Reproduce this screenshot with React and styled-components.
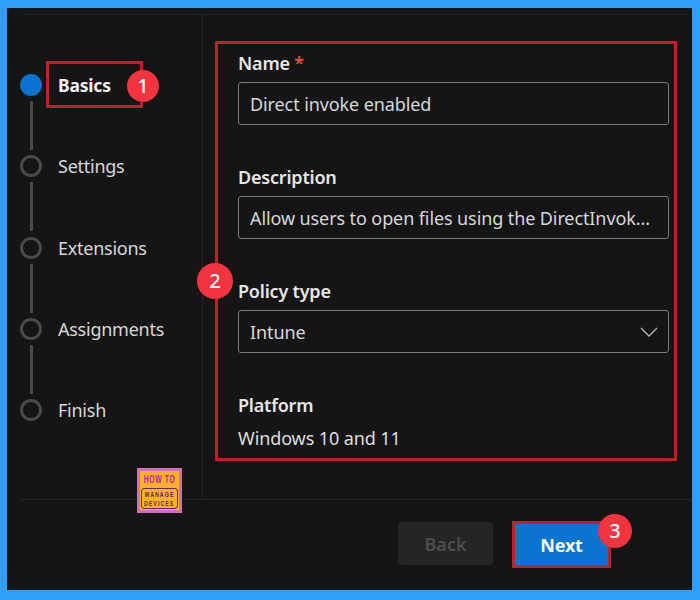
import React from "react";
import styled, { createGlobalStyle } from "styled-components";

const Global = createGlobalStyle`
  html, body { margin: 0; padding: 0; background: #2f9ffa; }
  #root { width: 700px; height: 600px; }
  * { box-sizing: border-box; }
`;

const Frame = styled.div`
  position: relative;
  width: 700px;
  height: 600px;
  border-style: solid;
  border-color: #2f9ffa;
  border-width: 8px 8px 10px 7px;
  background: #151515;
  font-family: "Noto Sans", "Open Sans", sans-serif;
  display: flex;
  flex-direction: column;
  overflow: hidden;
`;
const Body = styled.div`
  flex: none;
  height: 485px;
  margin: 6px 0 0 13px;
  border-top: 1px solid #202020;
  display: flex;
`;
const Sidebar = styled.nav`
  flex: none;
  width: 183px;
  border-right: 1px solid #252525;
  padding-top: 59px;
`;
const Step = styled.div`
  height: 81.25px;
  display: flex;
  gap: 16px;
`;
const Track = styled.div`
  flex: none;
  width: 22px;
  display: flex;
  flex-direction: column;
  align-items: center;
`;
const Dot = styled.span`
  flex: none;
  width: 22px;
  height: 22px;
  border-radius: 50%;
  background: ${(p) => (p.$active ? "#0b73d0" : "transparent")};
  border: ${(p) => (p.$active ? "none" : "3px solid #4a4a4a")};
`;
const Connector = styled.span`
  flex: none;
  width: 3px;
  height: 49px;
  margin-top: 5px;
  background: #4a4a4a;
`;
const StepLabel = styled.span`
  line-height: 23px;
  font-size: ${(p) => (p.$active ? "17.5px" : "18px")};
  letter-spacing: ${(p) => (p.$active ? "-0.2px" : "-0.25px")};
  font-weight: ${(p) => (p.$active ? 700 : 400)};
  color: ${(p) => (p.$active ? "#f2f2f2" : "#d8d8d8")};
`;
const FormBox = styled.section`
  flex: none;
  width: 462px;
  height: 420px;
  margin: 26px 0 0 12px;
  border: 3px solid #c0202a;
  padding: 8px 5px 0 20px;
`;
const Group = styled.div`
  height: 114px;
  display: flex;
  flex-direction: column;
`;
const Label = styled.div`
  height: 30px;
  line-height: 22px;
  font-size: 18px;
  font-weight: 600;
  letter-spacing: -0.2px;
  color: #e6e6e6;
`;
const Required = styled.span`
  color: #e0503c;
`;
const Field = styled.div`
  height: 43px;
  border: 1.5px solid #7c7c7c;
  border-radius: 3px;
  padding: 1px 11px 0;
  display: flex;
  align-items: center;
  justify-content: space-between;
  font-size: 18px;
  letter-spacing: -0.1px;
  color: #d8d8d8;
  white-space: nowrap;
`;
const Value = styled.div`
  margin-top: 2px;
  line-height: 24px;
  font-size: 18px;
  letter-spacing: -0.1px;
  color: #dedede;
`;
const Footer = styled.footer`
  flex: 1;
  margin-left: 13px;
  border-top: 1px solid #232323;
  display: flex;
  justify-content: flex-end;
  align-items: flex-start;
  gap: 19px;
  padding: 21px 81px 0 0;
`;
const BackButton = styled.button`
  width: 95px;
  height: 43px;
  margin-top: 1px;
  border: none;
  border-radius: 3px;
  background: #252525;
  color: #4c4c4c;
  font: 600 18px "Noto Sans", sans-serif;
`;
const NextButton = styled.button`
  width: 99px;
  height: 47px;
  border: 3px solid #c0202a;
  background: #0b73d0;
  color: #f4f8fc;
  font: 700 18px "Noto Sans", sans-serif;
  letter-spacing: -0.2px;
`;
const Badge = styled.span`
  position: absolute;
  left: ${(p) => p.$x - p.$r - 7}px;
  top: ${(p) => p.$y - p.$r - 8}px;
  width: ${(p) => p.$r * 2}px;
  height: ${(p) => p.$r * 2}px;
  border-radius: 50%;
  background: #f13440;
  color: #fff;
  font: 500 20px/1 "Noto Sans", sans-serif;
  display: flex;
  align-items: center;
  justify-content: center;
`;
const Highlight = styled.div`
  position: absolute;
  left: 39px;
  top: 53px;
  width: 97px;
  height: 47px;
  border: 3px solid #c0202a;
`;
const Logo = styled.div`
  position: absolute;
  left: 130px;
  top: 460px;
  width: 45px;
  height: 45px;
  border: 3px solid #cf6fc4;
  background: #fdb022;
  display: flex;
  flex-direction: column;
  align-items: center;
  padding-top: 2px;
  font-family: "Liberation Sans", sans-serif;
  font-weight: 700;
`;
const LogoTop = styled.span`
  font-size: 11px;
  line-height: 12px;
  color: #c020b0;
  transform: scaleX(0.62);
  letter-spacing: 1px;
  white-space: nowrap;
`;
const LogoBottom = styled.span`
  margin-top: 3px;
  width: 37px;
  height: 21px;
  border: 1px solid #5a2a6a;
  border-radius: 3px;
  display: flex;
  flex-direction: column;
  align-items: center;
  justify-content: center;
`;
const LogoLine = styled.span`
  font-size: 8px;
  line-height: 9px;
  color: #5a1f70;
  letter-spacing: 1.6px;
  transform: scaleX(0.66);
  white-space: nowrap;
`;
const Chevron = styled.svg`
  flex: none;
  width: 18px;
  height: 10px;
  margin-right: -1px;
`;

const steps = ["Basics", "Settings", "Extensions", "Assignments", "Finish"];

export default function App() {
  return (
    <>
      <Global />
      <Frame>
        <Body>
          <Sidebar>
            {steps.map((s, i) => (
              <Step key={s}>
                <Track>
                  <Dot $active={i === 0} />
                  {i < steps.length - 1 && <Connector />}
                </Track>
                <StepLabel $active={i === 0}>{s}</StepLabel>
              </Step>
            ))}
          </Sidebar>
          <FormBox>
            <Group>
              <Label>
                Name <Required>*</Required>
              </Label>
              <Field>Direct invoke enabled</Field>
            </Group>
            <Group>
              <Label>Description</Label>
              <Field>Allow users to open files using the DirectInvok...</Field>
            </Group>
            <Group>
              <Label>Policy type</Label>
              <Field>
                Intune
                <Chevron viewBox="0 0 18 10">
                  <polyline points="1,1 9,9 17,1" fill="none" stroke="#b8b8b8" strokeWidth="1.3" />
                </Chevron>
              </Field>
            </Group>
            <Group>
              <Label>Platform</Label>
              <Value>Windows 10 and 11</Value>
            </Group>
          </FormBox>
        </Body>
        <Footer>
          <BackButton disabled>Back</BackButton>
          <NextButton>Next</NextButton>
        </Footer>
        <Highlight />
        <Badge $x={143} $y={86} $r={16}>1</Badge>
        <Badge $x={215} $y={281} $r={18}>2</Badge>
        <Badge $x={615} $y={531} $r={17}>3</Badge>
        <Logo>
          <LogoTop>HOW TO</LogoTop>
          <LogoBottom>
            <LogoLine>MANAGE</LogoLine>
            <LogoLine>DEVICES</LogoLine>
          </LogoBottom>
        </Logo>
      </Frame>
    </>
  );
}
